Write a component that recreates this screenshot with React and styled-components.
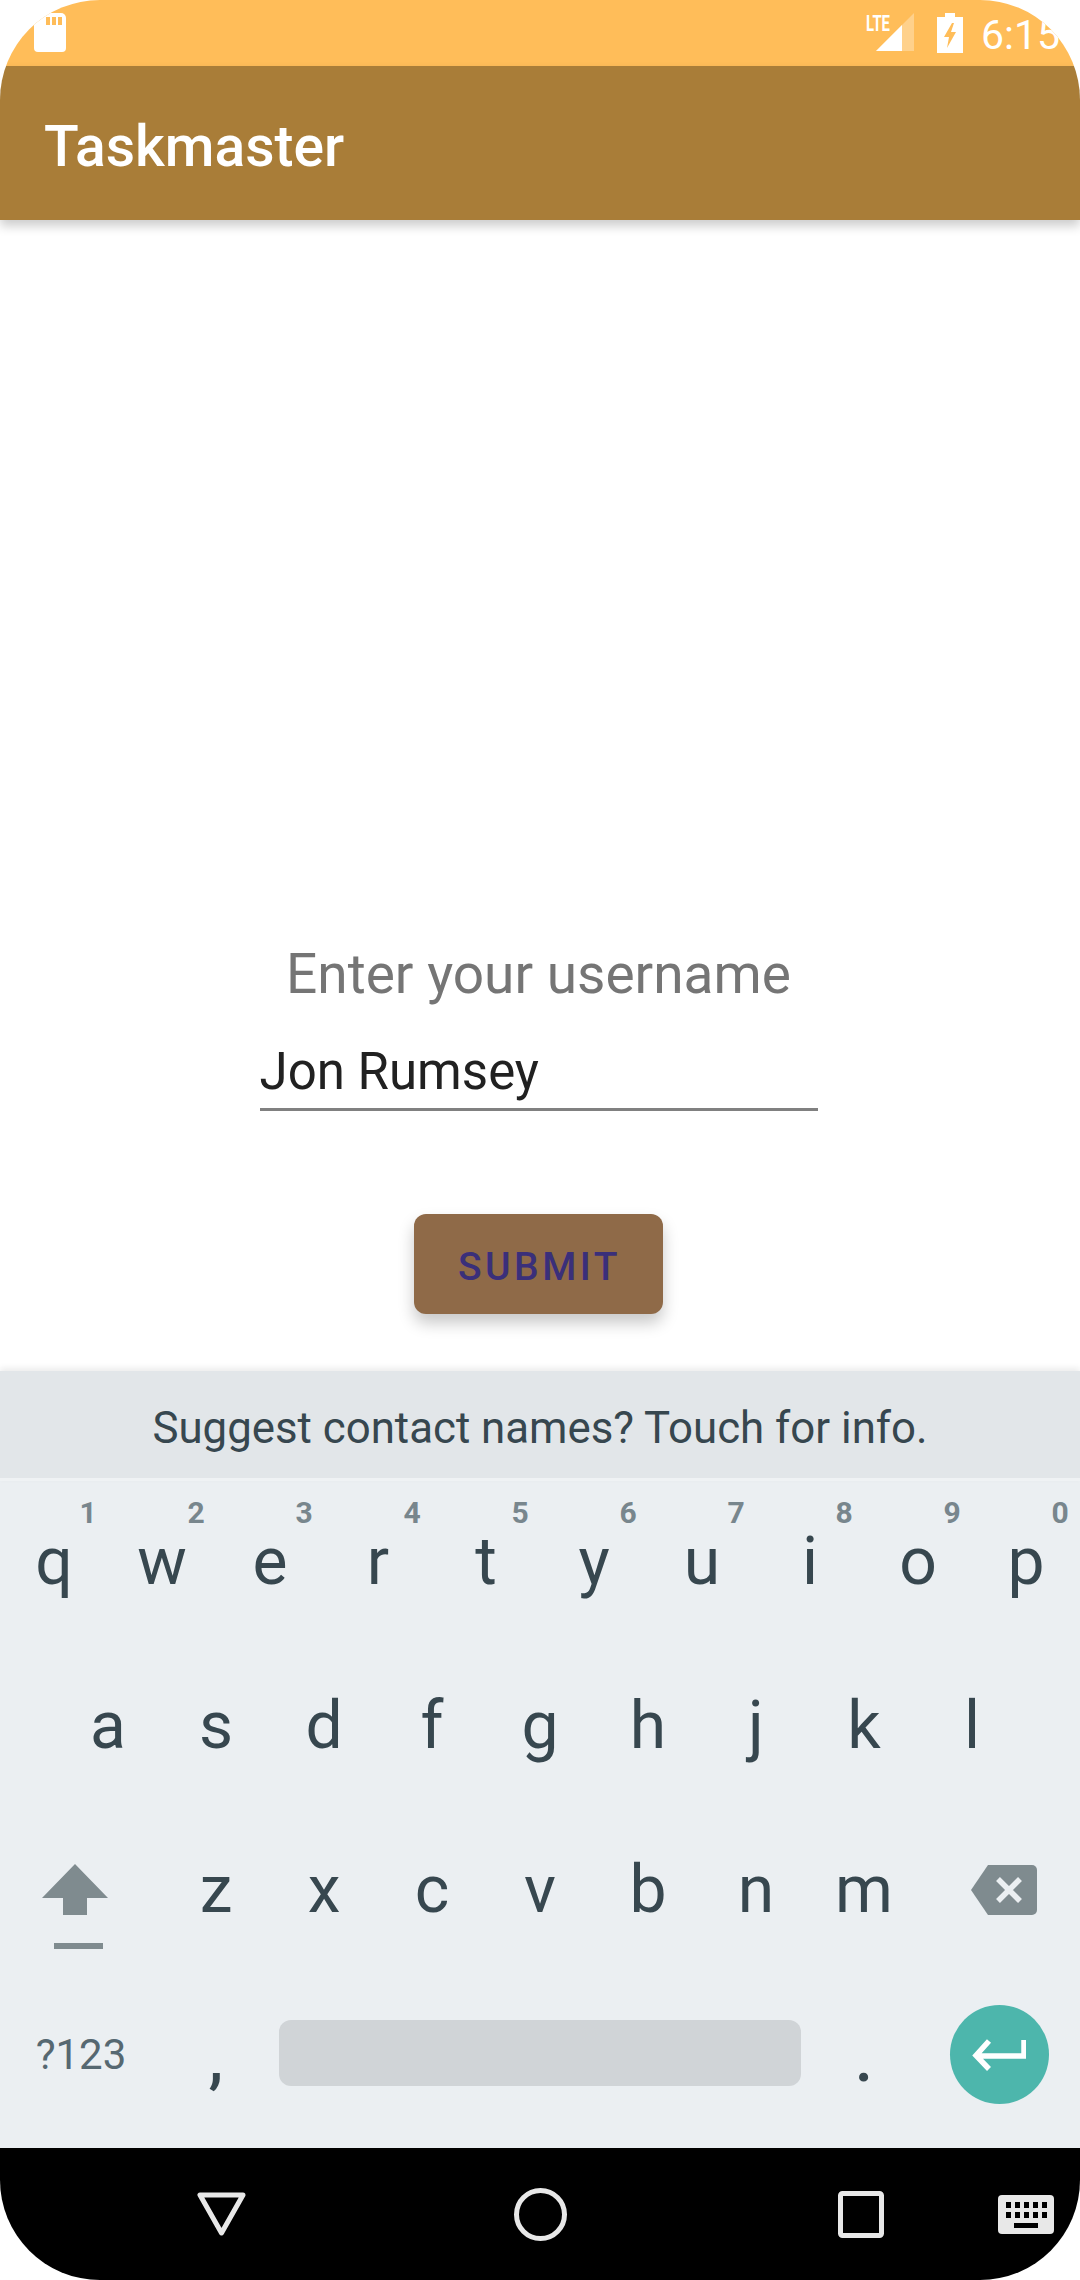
import React from 'react';
import styled, { createGlobalStyle } from 'styled-components';

const GlobalStyle = createGlobalStyle`
  html, body {
    margin: 0;
    padding: 0;
    background: #ffffff;
  }
  * {
    box-sizing: border-box;
  }
`;

const Phone = styled.div`
  width: 1080px;
  height: 2280px;
  border-radius: 100px;
  overflow: hidden;
  display: flex;
  flex-direction: column;
  background: #ffffff;
  font-family: Roboto, "Liberation Sans", sans-serif;
`;

const StatusBar = styled.div`
  height: 66px;
  flex: none;
  display: flex;
  align-items: flex-start;
  justify-content: space-between;
  padding: 13px 0 0 34px;
  background: #ffbd59;
`;

const StatusRight = styled.div`
  display: flex;
  align-items: flex-start;
  width: 214px;
`;

const Clock = styled.span`
  margin: -1px 0 0 18px;
  font-size: 41px;
  line-height: 46px;
  color: #ffffff;
  white-space: nowrap;
`;

const AppBar = styled.header`
  position: relative;
  z-index: 2;
  height: 154px;
  flex: none;
  display: flex;
  align-items: center;
  padding: 6px 0 0 44px;
  background: #a97d38;
  box-shadow: 0 6px 10px rgba(0, 0, 0, 0.2);
`;

const Title = styled.h1`
  margin: 0;
  font-size: 57px;
  font-weight: 500;
  color: #ffffff;
`;

const Main = styled.main`
  flex: 1;
  display: flex;
  flex-direction: column;
  align-items: center;
  justify-content: flex-end;
  padding: 0 3px 57px 0;
`;

const Prompt = styled.div`
  font-size: 55px;
  line-height: 62px;
  color: #757575;
`;

const NameField = styled.div`
  width: 558px;
  height: 74px;
  margin-top: 32px;
  font-size: 51px;
  line-height: 70px;
  color: #212121;
  border-bottom: 3px solid #808080;
`;

const SubmitButton = styled.button`
  width: 249px;
  height: 100px;
  margin-top: 103px;
  padding: 5px 0 0 2px;
  border: 0;
  border-radius: 12px;
  background: #8f6a48;
  color: #3a2f7a;
  font-family: inherit;
  font-size: 39px;
  font-weight: 500;
  letter-spacing: 3.5px;
  box-shadow: 0 9px 16px rgba(0, 0, 0, 0.22);
`;

const SuggestBar = styled.div`
  position: relative;
  z-index: 1;
  height: 110px;
  flex: none;
  display: flex;
  align-items: center;
  justify-content: center;
  padding-top: 6px;
  background: #e2e6e9;
  border-bottom: 3px solid #eff2f4;
  box-shadow: 0 -3px 6px rgba(0, 0, 0, 0.08);
  color: #37474f;
  font-size: 43.800px;
`;

const Keyboard = styled.div`
  height: 667px;
  flex: none;
  display: grid;
  grid-template-rows: repeat(4, 165px);
  background: #ebeff2;
`;

const KeyRow = styled.div`
  display: flex;
  padding: 0 ${(p) => p.$inset || 0}px;
  transform: translateY(${(p) => p.$lift || 0}px);
`;

const Key = styled.div`
  position: relative;
  flex: none;
  width: ${(p) => p.$width || 108}px;
  display: flex;
  align-items: center;
  justify-content: center;
  padding-bottom: 2px;
  color: #37474f;
  font-size: 66px;
  line-height: 1;
`;

const Hint = styled.span`
  position: absolute;
  top: 18px;
  left: 88px;
  transform: translateX(-50%);
  font-size: 30px;
  font-weight: 700;
  color: #78868d;
`;

const ModeLabel = styled.span`
  font-size: 42px;
  color: #566871;
`;

const Punct = styled.span`
  font-size: 66px;
  font-weight: 500;
  line-height: 1;
  transform: translateY(${(p) => p.$shift}px);
`;

const SpaceBar = styled.div`
  width: 522px;
  height: 66px;
  margin: 0 9px;
  border-radius: 12px;
  background: #d0d4d7;
`;

const SpaceKey = styled.div`
  flex: none;
  width: 540px;
  display: flex;
  align-items: center;
  padding-bottom: 5px;
`;

const EnterCircle = styled.div`
  width: 99px;
  height: 99px;
  border-radius: 50%;
  display: flex;
  align-items: center;
  justify-content: center;
  background: #4db6ac;
`;

const IconBox = styled.div`
  display: flex;
  transform: translate(${(p) => p.$dx || 0}px, ${(p) => p.$dy || 0}px);
`;

const NavBar = styled.nav`
  height: 132px;
  flex: none;
  display: flex;
  align-items: center;
  background: #000000;
`;

const NavSlot = styled.div`
  flex: none;
  width: ${(p) => p.$width}px;
  display: flex;
  justify-content: flex-end;
`;

function SdIcon() {
  return (
    <svg width="32" height="39" viewBox="0 0 32 39">
      <path d="M12 0H27a5 5 0 0 1 5 5V35a4 4 0 0 1-4 4H4a4 4 0 0 1-4-4V10Z" fill="#fff" />
      <path d="M12 4h4v8h-4zM18 4h4v8h-4zM24 4h4v8h-4z" fill="#ffbd59" />
    </svg>
  );
}

function SignalIcon() {
  return (
    <svg width="48" height="39" viewBox="0 0 48 39">
      <path d="M48 0V38H10Z" fill="#fff" fillOpacity="0.3" />
      <path d="M36 12V38H10Z" fill="#fff" />
      <text x="0" y="18" fontFamily="Roboto, sans-serif" fontSize="22" fontWeight="700" fill="#fff" textLength="24" lengthAdjust="spacingAndGlyphs">LTE</text>
    </svg>
  );
}

function BatteryIcon() {
  return (
    <svg width="26" height="40" viewBox="0 0 26 40" style={{ marginLeft: 23 }}>
      <path d="M8 0h10v4h8v36H0V4h8Z" fill="#fff" />
      <path d="M15 10L7 24h5l-2 11 9-16h-5l3-9Z" fill="#ffbd59" />
    </svg>
  );
}

function ShiftIcon() {
  return (
    <svg width="66" height="86" viewBox="0 0 66 86">
      <path d="M33 0L66 34H45V51H21V34H0Z" fill="#7f8b8f" />
      <rect x="12" y="79" width="49" height="6" fill="#7f8b8f" />
    </svg>
  );
}

function DeleteIcon() {
  return (
    <svg width="66" height="50" viewBox="0 0 66 50">
      <path d="M17 0H61a5 5 0 0 1 5 5V45a5 5 0 0 1-5 5H17L0 25Z" fill="#7f8b8f" />
      <path d="M27 14L49 36M49 14L27 36" stroke="#ebeff2" strokeWidth="5.5" fill="none" />
    </svg>
  );
}

function EnterIcon() {
  return (
    <svg width="54" height="32" viewBox="0 0 54 32">
      <path d="M52 1V17H4M17 2L4 16.500L17 30" stroke="#fff" strokeWidth="5.5" fill="none" />
    </svg>
  );
}

function BackIcon() {
  return (
    <svg width="51" height="46" viewBox="0 0 51 46">
      <path d="M4 4H47L25.500 42Z" stroke="#e8e8e8" strokeWidth="5" strokeLinejoin="round" fill="none" />
    </svg>
  );
}

function HomeIcon() {
  return (
    <svg width="53" height="53" viewBox="0 0 53 53">
      <circle cx="26.500" cy="26.500" r="24" stroke="#e8e8e8" strokeWidth="5" fill="none" />
    </svg>
  );
}

function RecentsIcon() {
  return (
    <svg width="46" height="47" viewBox="0 0 46 47">
      <rect x="2.500" y="2.500" width="41" height="42" rx="2" stroke="#e8e8e8" strokeWidth="5" fill="none" />
    </svg>
  );
}

function KeyboardIcon() {
  const dots = [8, 17, 26, 35, 44];
  return (
    <svg width="56" height="39" viewBox="0 0 56 39">
      <rect width="56" height="39" rx="4" fill="#e8e8e8" />
      {dots.map((x) => (
        <rect key={`a${x}`} x={x} y="7" width="5" height="6" fill="#000" />
      ))}
      {dots.map((x) => (
        <rect key={`b${x}`} x={x} y="17" width="5" height="6" fill="#000" />
      ))}
      <rect x="16" y="28" width="24" height="5" fill="#000" />
    </svg>
  );
}

const TOP_ROW = ['q', 'w', 'e', 'r', 't', 'y', 'u', 'i', 'o', 'p'];
const HINTS = ['1', '2', '3', '4', '5', '6', '7', '8', '9', '0'];
const MIDDLE_ROW = ['a', 's', 'd', 'f', 'g', 'h', 'j', 'k', 'l'];
const BOTTOM_ROW = ['z', 'x', 'c', 'v', 'b', 'n', 'm'];

export default function App() {
  return (
    <Phone>
      <GlobalStyle />
      <StatusBar>
        <SdIcon />
        <StatusRight>
          <SignalIcon />
          <BatteryIcon />
          <Clock>6:15</Clock>
        </StatusRight>
      </StatusBar>
      <AppBar>
        <Title>Taskmaster</Title>
      </AppBar>
      <Main>
        <Prompt>Enter your username</Prompt>
        <NameField>Jon Rumsey</NameField>
        <SubmitButton>SUBMIT</SubmitButton>
      </Main>
      <SuggestBar>Suggest contact names? Touch for info.</SuggestBar>
      <Keyboard>
        <KeyRow $lift={-1}>
          {TOP_ROW.map((letter, i) => (
            <Key key={letter}>
              {letter}
              <Hint>{HINTS[i]}</Hint>
            </Key>
          ))}
        </KeyRow>
        <KeyRow $inset={54} $lift={-2}>
          {MIDDLE_ROW.map((letter) => (
            <Key key={letter}>{letter}</Key>
          ))}
        </KeyRow>
        <KeyRow $lift={-3}>
          <Key $width={162}>
            <IconBox $dx={-6} $dy={17}>
              <ShiftIcon />
            </IconBox>
          </Key>
          {BOTTOM_ROW.map((letter) => (
            <Key key={letter}>{letter}</Key>
          ))}
          <Key $width={162}>
            <IconBox $dx={5}>
              <DeleteIcon />
            </IconBox>
          </Key>
        </KeyRow>
        <KeyRow $lift={-3}>
          <Key $width={162}>
            <ModeLabel>?123</ModeLabel>
          </Key>
          <Key>
            <Punct $shift={4}>,</Punct>
          </Key>
          <SpaceKey>
            <SpaceBar />
          </SpaceKey>
          <Key>
            <Punct $shift={4}>.</Punct>
          </Key>
          <Key $width={162}>
            <EnterCircle>
              <EnterIcon />
            </EnterCircle>
          </Key>
        </KeyRow>
      </Keyboard>
      <NavBar>
        <NavSlot $width={247}>
          <BackIcon />
        </NavSlot>
        <NavSlot $width={320}>
          <HomeIcon />
        </NavSlot>
        <NavSlot $width={317}>
          <RecentsIcon />
        </NavSlot>
        <NavSlot $width={170}>
          <KeyboardIcon />
        </NavSlot>
      </NavBar>
    </Phone>
  );
}
